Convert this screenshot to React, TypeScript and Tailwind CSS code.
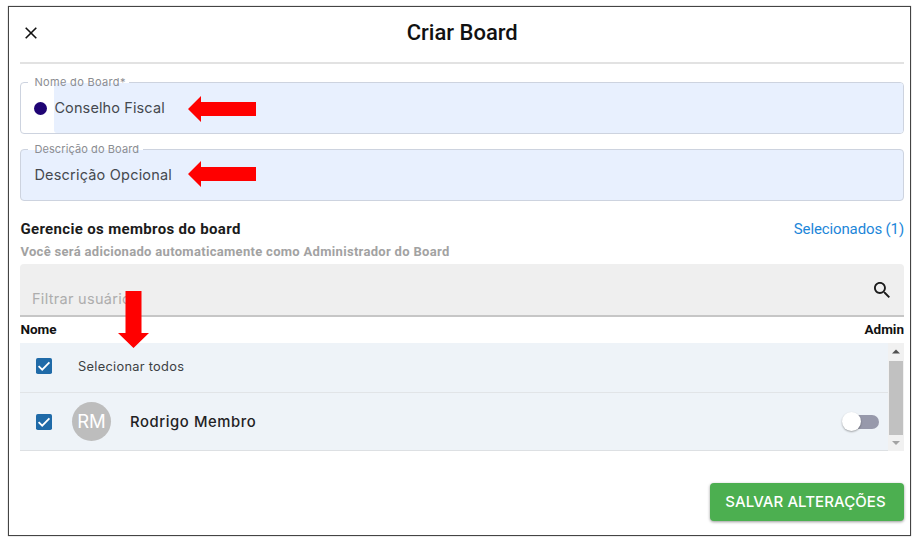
import type { ReactNode } from "react";

type FieldProps = {
  label: string;
  notchClass: string;
  labelClass: string;
  className?: string;
  children: ReactNode;
};

const OutlinedField = ({ label, notchClass, labelClass, className = "", children }: FieldProps) => {
  return (
    <div
      className={`relative flex h-[52px] items-center overflow-visible rounded border border-[#cdd3df] ${className}`}
    >
      {/* Gap in the outline behind the label */}
      <span className={`absolute -top-px left-[7px] h-px bg-white ${notchClass}`} />
      <label
        className={`absolute -top-[9px] left-[13px] whitespace-nowrap text-[11px] leading-4 text-[#8b8d92] ${labelClass}`}
      >
        {label}
      </label>
      {children}
    </div>
  );
};

const Checkbox = () => {
  return (
    <svg className="h-4 w-4 shrink-0" viewBox="0 0 16 16">
      <rect width="16" height="16" rx="1.8" fill="#1f6aa8" />
      <path d="M2.6 8.2 6.2 11.7 13.4 4.4" fill="none" stroke="#fff" strokeWidth="1.8" />
    </svg>
  );
};

const LeftArrow = ({ className }: { className: string }) => {
  return (
    <svg className={`absolute h-[26px] w-[68px] ${className}`} viewBox="0 0 68 26">
      <path d="M0 13 13 0V6H68V20H13V26Z" fill="#f00" />
    </svg>
  );
};

const Scrollbar = () => {
  return (
    <div className="flex h-[108px] w-4 flex-col items-center bg-[#f1f1f1]">
      <svg className="h-[18px] w-4" viewBox="0 0 16 18">
        <path d="M4 10.5 8 6.5 12 10.5Z" fill="#505050" />
      </svg>
      <div className="h-[74px] w-[14px] bg-[#c1c1c1]" />
      <svg className="h-4 w-4" viewBox="0 0 16 16">
        <path d="M4 6 8 10 12 6Z" fill="#a3a3a3" />
      </svg>
    </div>
  );
};

const App = () => {
  return (
    <div className="h-[539px] w-[914px] bg-white pl-2 pt-[6px] font-['Inter',sans-serif]">
      <div className="relative h-[530px] w-[903px] border border-[#444] pl-[11.4px] pr-[6px] shadow-[0_0_1px_#888]">
        {/* Header */}
        <header className="relative flex h-[57px] items-center justify-center border-b-2 border-[#e2e2e2] pb-[3px]">
          <svg className="absolute left-[4.5px] top-5 h-3 w-3" viewBox="0 0 12 12">
            <path d="M.7.7 11.3 11.3M11.3.7.7 11.3" stroke="#111" strokeWidth="1.6" />
          </svg>
          <h1 className="font-['Roboto',sans-serif] text-[22px] font-medium leading-7 text-[#111]">
            Criar Board
          </h1>
        </header>

        {/* Board fields */}
        <div className="mt-[18px] flex flex-col gap-[15px]">
          <OutlinedField label="Nome do Board*" notchClass="w-[101px]" labelClass="tracking-[0.33px]">
            <div className="flex w-[33px] justify-center pl-[5px]">
              <span className="h-[13px] w-[13px] rounded-full bg-[#1f0474]" />
            </div>
            <div className="flex h-[50px] flex-1 items-center rounded-[3px] bg-[#e8f0fe] text-[14.5px] tracking-[0.12px] text-[#45494f]">
              Conselho Fiscal
            </div>
          </OutlinedField>
          <OutlinedField
            label="Descrição do Board"
            notchClass="w-[115px]"
            labelClass="tracking-[0.1px]"
            className="bg-[#e8f0fe]"
          >
            <span className="pl-[13px] text-[14.5px] tracking-[0.2px] text-[#45494f]">
              Descrição Opcional
            </span>
          </OutlinedField>
        </div>

        {/* Members heading */}
        <div className="mt-4 flex h-6 items-center justify-between pt-px font-['Roboto',sans-serif]">
          <h2 className="text-[15px] font-bold tracking-[0.34px] text-[#1b1b1b]">
            Gerencie os membros do board
          </h2>
          <a className="text-[15px] tracking-[-0.13px] text-[#1c86d9]">Selecionados (1)</a>
        </div>
        <p className="h-[23px] pt-px font-['Roboto',sans-serif] text-[13px] font-bold leading-5 tracking-[0.31px] text-[#a2a2a2]">
          Você será adicionado automaticamente como Administrador do Board
        </p>

        {/* Filter */}
        <div className="flex h-[53px] items-center justify-between rounded-t border-b-2 border-[#c6c6c6] bg-[#efefef] pl-[11.6px] pr-[14px]">
          <span className="pt-[19px] text-[14.5px] leading-5 tracking-[0.3px] text-[#adadad]">
            Filtrar usuários
          </span>
          <svg className="h-4 w-4" viewBox="3 3 17.5 17.5">
            <path
              d="M15.5 14h-.79l-.28-.27C15.41 12.59 16 11.11 16 9.5 16 5.91 13.09 3 9.5 3S3 5.91 3 9.5 5.91 16 9.5 16c1.61 0 3.09-.59 4.23-1.57l.27.28v.79l5 4.99L20.49 19l-4.99-5zm-6 0C7.01 14 5 11.99 5 9.5S7.01 5 9.5 5 14 7.01 14 9.5 11.99 14 9.5 14z"
              fill="#1c1c1c"
            />
          </svg>
        </div>

        <div className="flex h-[26px] items-center justify-between pb-[2px] font-['Roboto',sans-serif] text-[13.5px] font-bold text-[#111]">
          <span>Nome</span>
          <span>Admin</span>
        </div>

        {/* Members list */}
        <div className="flex h-[108px]">
          <div className="flex-1 bg-[#eef3f8]">
            <div className="flex h-[50px] items-center border-b border-[#e1e4e7] pb-[3px] pl-[15.6px]">
              <Checkbox />
              <span className="pl-[26px] pt-px text-[12.8px] tracking-[0.3px] text-[#3c4043]">
                Selecionar todos
              </span>
            </div>
            <div className="flex h-[58px] items-center border-b border-[#dde0e3] pl-[15.6px]">
              <Checkbox />
              <div className="ml-5 flex h-[39px] w-[39px] items-center justify-center rounded-full bg-[#bdbdbd] text-[18.5px] text-white">
                RM
              </div>
              <span className="ml-[19px] flex-1 pt-px text-[14.8px] font-medium tracking-[0.6px] text-[#1f2224]">
                Rodrigo Membro
              </span>
              <div className="mr-[9px] flex h-[14px] w-[34px] items-center rounded-full bg-[#9799ab]">
                <span className="-ml-[3px] h-[19px] w-[19px] rounded-full bg-white shadow-[0_1px_2px_#0005]" />
              </div>
            </div>
          </div>
          <Scrollbar />
        </div>

        {/* Save */}
        <div className="mt-8 flex justify-end">
          <button className="h-[38px] w-[194px] rounded bg-[#4caf50] pr-[3px] text-[15px] font-medium tracking-[0.08px] text-white shadow-[0_1px_3px_#0006]">
            SALVAR ALTERAÇÕES
          </button>
        </div>

        {/* Callouts */}
        <LeftArrow className="left-[179px] top-[89px]" />
        <LeftArrow className="left-[179px] top-[154px]" />
        <svg className="absolute left-[109px] top-[284px] h-[57px] w-[31px]" viewBox="0 0 31 57">
          <path d="M7.5 0H23.5V42H31L15.5 57 0 42H7.5Z" fill="#f00" />
        </svg>
      </div>
    </div>
  );
};

export default App;
